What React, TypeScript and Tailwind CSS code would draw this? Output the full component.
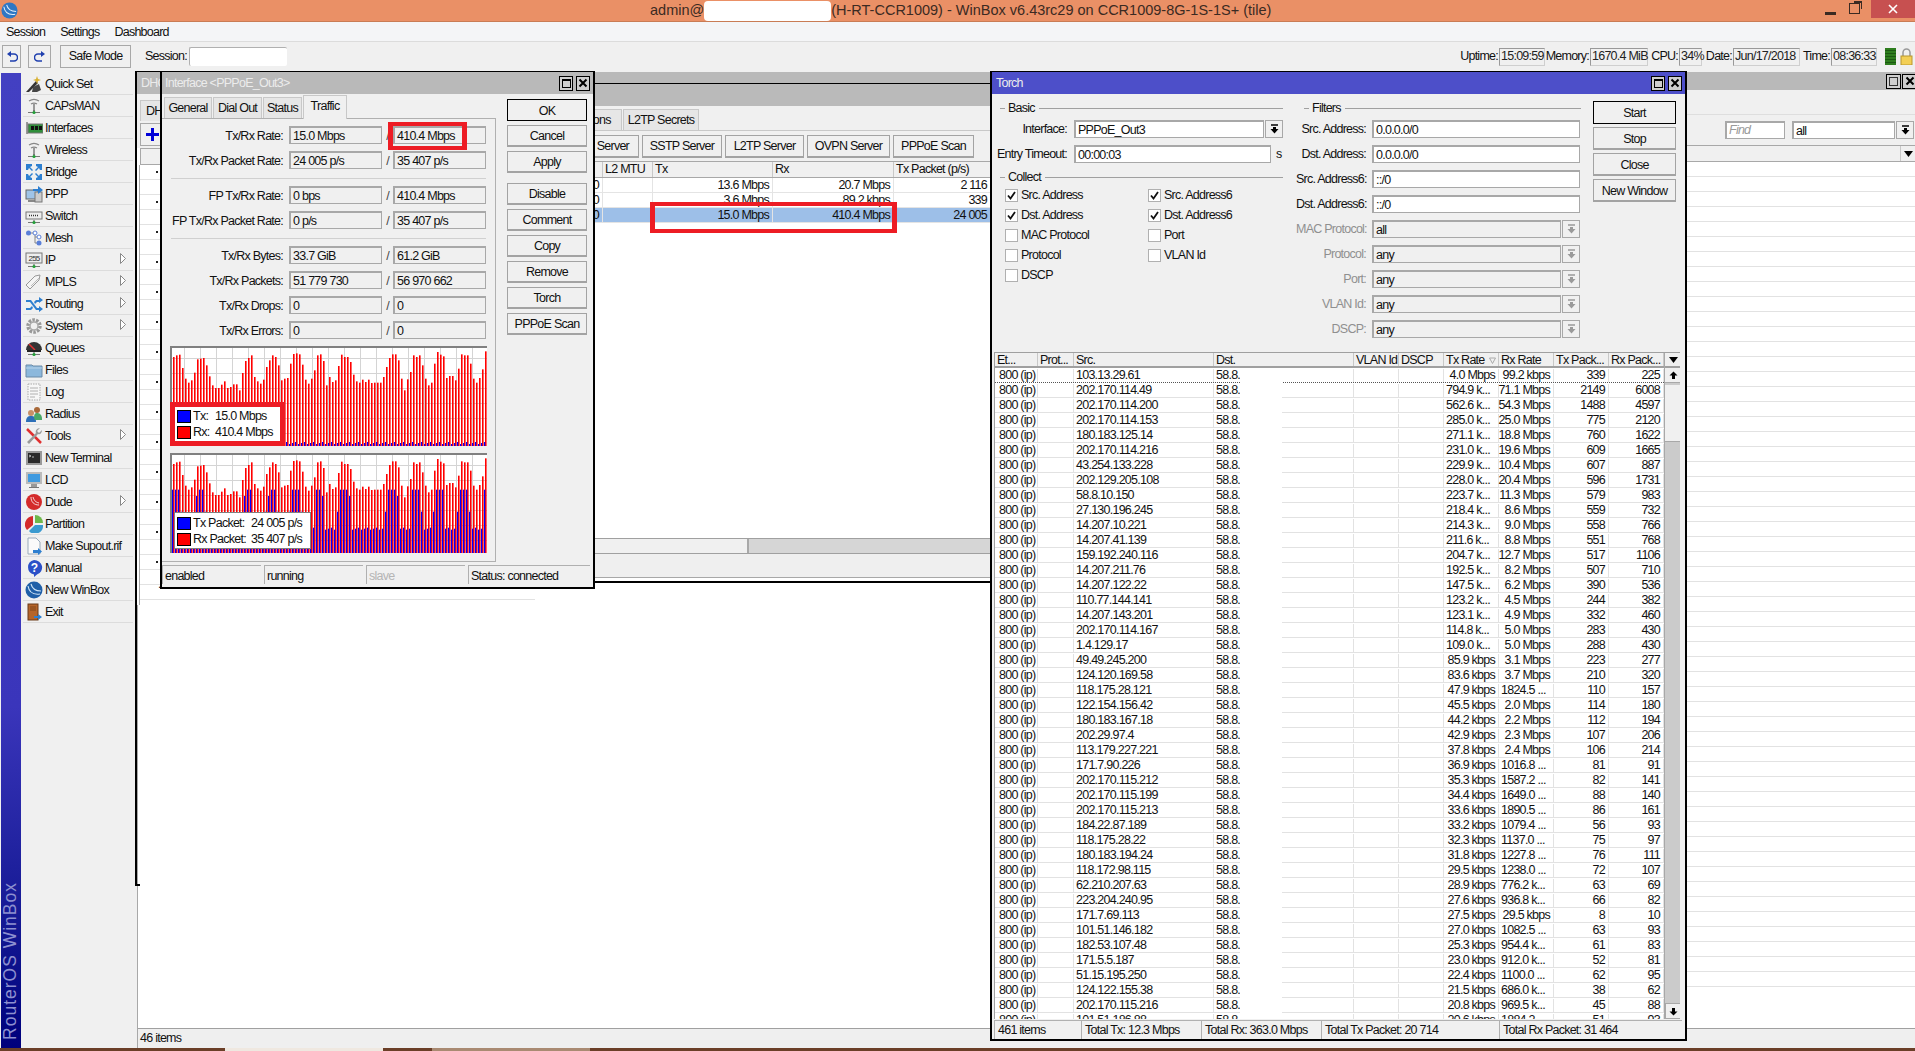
import React from "react";

const tops = [45,40,38,78,110,122,115,92,52,50,48,70,103,130,138,138,128,118,138,135,127,127,145,93,57,48,40,105,118,125,113,75,55,40,45,70,115,110,108,65,36,34,37,68,113,125,110,85,40,37,57,130,105,120,115,72,38,45,45,60,98,118,122,113,120,113,123,122,122,122,105,75,48,37,37,55,110,145,112,90,40,45,40,70,110,130,122,65,30,38,43,108,102,102,115,80,37,40,40,65,110,122,108,82,28];

function Chart({ packet, children }: { packet?: boolean; children: React.ReactNode }) {
  const hLines = [10, 25, 40, 55, 70, 85];
  const vLines = Array.from({ length: 20 }, (_, i) => 12 + i * 16);
  return (
    <div className="relative w-[317px] h-[100px] bg-white border-t-2 border-l-2 border-[#808080]">
      <svg width="315" height="98" viewBox="0 0 315 98" className="block">
        {hLines.map((y) => <line key={y} x1="0" x2="315" y1={y + 0.5} y2={y + 0.5} stroke="#d4d4d4" />)}
        {vLines.map((x) => <line key={x} y1="0" y2="98" x1={x + 0.5} x2={x + 0.5} stroke="#d4d4d4" />)}
        {tops.map((t, i) => {
          const x = i * 3;
          const red = (318 - t) / 3 - 2;
          let blue = 2 + (i % 3);
          if (packet) {
            const bt = t <= 50 ? 446 : t <= 60 ? 465 : t <= 80 ? 512 : 566 - (i % 3) * 3;
            blue = (636 - bt) / 3;
          }
          return (
            <g key={i}>
              <rect x={x + 1} y={98 - red} width="1.6" height={red} fill="#ff0000" />
              <rect x={x} y={98 - blue} width="1.2" height={blue} fill="#0000ff" />
            </g>
          );
        })}
      </svg>
      {children}
    </div>
  );
}

function LegendRow({ color, label, value, w }: { color: string; label: string; value: string; w: string }) {
  return (
    <div className="flex items-center h-[16px]">
      <span className={`w-[14px] h-[13px] border border-black ${color}`} />
      <span className={`ml-[2px] ${w}`}>{label}</span>
      <span>{value}</span>
    </div>
  );
}

function TitleButtons({ restore }: { restore?: boolean }) {
  return (
    <div className="flex gap-[3px] ml-auto mr-[3px]">
      <div className="w-[14px] h-[15px] border border-black bg-[#cfcfcf] flex items-center justify-center">
        <div className={restore ? "w-[8px] h-[9px] border border-[#333] border-t-2" : "w-[9px] h-[9px] border border-black border-t-2"} />
      </div>
      <div className="w-[14px] h-[15px] border border-black bg-[#cfcfcf] flex items-center justify-center">
        <svg width="10" height="10" viewBox="0 0 10 10"><path d="M1.5 1.5l7 7M8.5 1.5l-7 7" stroke="#000" strokeWidth="2" /></svg>
      </div>
    </div>
  );
}

function DropBtn({ disabled }: { disabled?: boolean }) {
  const c = disabled ? "#9a9a9a" : "#000";
  return (
    <div className="w-[18px] h-[18px] border border-[#a8a8a8] bg-[#f0f0f0] flex items-center justify-center">
      <svg width="9" height="10" viewBox="0 0 9 10"><path d="M1 1h7" stroke={c} strokeWidth="1.5" /><path d="M3 3h3v2h2.500L4.500 9.500.5 5H3z" fill={c} /></svg>
    </div>
  );
}

function WinButton({ label, w = "w-[80px]", h = "h-[22px] pt-[2px]", strong, end }: { label: string; w?: string; h?: string; strong?: boolean; end?: boolean }) {
  return (
    <div className={`${w} ${h} flex items-center ${end ? "justify-end pr-[9px]" : "justify-center"} bg-[#f0f0f0] shrink-0 ${strong ? "border border-black" : "border border-[#a3a3a3] border-b-2"}`}>
      {label}
    </div>
  );
}

function Field({ text, width = "w-[93px]", children }: { text: string; width?: string; children?: React.ReactNode }) {
  return (
    <div className={`relative ${width} h-[18px] border border-[#a8a8a8] border-t-2 border-l-2 bg-[#f0f0f0] pl-[2px] pt-[1px] flex items-center`}>
      {text}
      {children}
    </div>
  );
}

function StatRow({ label, a, b, red }: { label: string; a: string; b: string; red?: boolean }) {
  return (
    <div className="flex items-center h-[18px] mb-[7px]">
      <div className="w-[121px] text-right pt-[2px]">{label}</div>
      <div className="ml-[6px]"><Field text={a} /></div>
      <div className="w-[11px] text-center text-[#444] pt-[2px]">/</div>
      <Field text={b}>
        {red && <div className="absolute left-[-7px] top-[-6px] w-[79px] h-[28px] border-x-[5px] border-y-[4px] border-[#ed1c24]" />}
      </Field>
    </div>
  );
}

function Sep() {
  return <div className="h-[10px] pt-[2px] ml-[9px] mr-[9px]"><div className="h-[1px] bg-[#d0d0d0]" /></div>;
}

function Tab({ label, w, active }: { label: string; w: string; active?: boolean }) {
  return (
    <div className={`${w} flex items-center justify-center border-x border-t border-[#c8c8c8] whitespace-nowrap ${active ? "h-[24px] bg-[#f0f0f0] pb-[2px] -mb-[1px] relative" : "h-[21px] bg-[#e6e6e6] pt-[1px]"}`}>
      {label}
    </div>
  );
}

function InterfaceWindow() {
  return (
    <div className="absolute left-[25px] top-0 w-[435px] h-[518px] bg-[#f0f0f0] border-2 border-t border-black flex flex-col z-20">
      <div className="h-[22px] shrink-0 bg-[#b9b9b9] text-[#ececec] flex items-center pl-[3px]">
        Interface &lt;PPPoE_Out3&gt;
        <TitleButtons />
      </div>
      <div className="flex">
        <div className="w-[334px]">
          <div className="flex items-end h-[24px] pl-[2px] gap-[1px]">
            <Tab label="General" w="w-[48px]" />
            <Tab label="Dial Out" w="w-[49px]" />
            <Tab label="Status" w="w-[39px]" />
            <Tab label="Traffic" w="w-[44px]" active />
          </div>
          <div className="h-[444px] border-y border-r border-[#b0b0b0] pt-[7px]">
            <StatRow label="Tx/Rx Rate:" a="15.0 Mbps" b="410.4 Mbps" red />
            <StatRow label="Tx/Rx Packet Rate:" a="24 005 p/s" b="35 407 p/s" />
            <Sep />
            <StatRow label="FP Tx/Rx Rate:" a="0 bps" b="410.4 Mbps" />
            <StatRow label="FP Tx/Rx Packet Rate:" a="0 p/s" b="35 407 p/s" />
            <Sep />
            <StatRow label="Tx/Rx Bytes:" a="33.7 GiB" b="61.2 GiB" />
            <StatRow label="Tx/Rx Packets:" a="51 779 730" b="56 970 662" />
            <StatRow label="Tx/Rx Drops:" a="0" b="0" />
            <StatRow label="Tx/Rx Errors:" a="0" b="0" />
            <div className="ml-[8px] flex flex-col gap-[7px]">
              <Chart>
                <div className="absolute -left-[2px] top-[54px] w-[115px] h-[44px] bg-white border-x-[5px] border-y-[5px] border-[#ed1c24] pl-[2px] pt-[1px]">
                  <LegendRow color="bg-[#0000ff]" label="Tx:" value="15.0 Mbps" w="w-[22px]" />
                  <LegendRow color="bg-[#ff0000]" label="Rx:" value="410.4 Mbps" w="w-[22px]" />
                </div>
              </Chart>
              <Chart packet>
                <div className="absolute left-[2px] top-[57px] w-[137px] h-[37px] bg-white border border-[#808080] pl-[2px] pt-[2px]">
                  <LegendRow color="bg-[#0000ff]" label="Tx Packet:" value="24 005 p/s" w="w-[58px]" />
                  <LegendRow color="bg-[#ff0000]" label="Rx Packet:" value="35 407 p/s" w="w-[58px]" />
                </div>
              </Chart>
            </div>
          </div>
        </div>
        <div className="ml-[11px] mt-[5px] flex flex-col gap-[4px]">
          <WinButton label="OK" strong />
          <WinButton label="Cancel" />
          <WinButton label="Apply" />
          <div className="h-[6px]" />
          <div className="-mt-[4px] flex flex-col gap-[4px]">
            <WinButton label="Disable" />
            <WinButton label="Comment" />
            <WinButton label="Copy" />
            <WinButton label="Remove" />
            <WinButton label="Torch" />
            <WinButton label="PPPoE Scan" />
          </div>
        </div>
      </div>
      <div className="flex gap-[3px] mt-[3px]">
        {[["enabled", "w-[99px]", ""], ["running", "w-[99px]", ""], ["slave", "w-[99px]", "text-[#b5b5b5]"], ["Status: connected", "w-[122px]", ""]].map(([t, w, c]) => (
          <div key={t} className={`${w} ${c} h-[19px] border-t border-l border-[#b0b0b0] pl-[2px] pt-[2px] flex items-center`}>{t}</div>
        ))}
      </div>
    </div>
  );
}

function PPPWindow() {
  const cols = "grid grid-cols-[98px_50px_120px_121px_97px]";
  const rows = [
    ["0", "", "13.6 Mbps", "20.7 Mbps", "2 116", ""],
    ["0", "", "3.6 Mbps", "89.2 kbps", "339", ""],
    ["0", "", "15.0 Mbps", "410.4 Mbps", "24 005", "bg-[#9dbfe8]"],
  ];
  return (
    <div className="absolute left-[370px] top-[12px] w-[486px] h-[500px] bg-white border-t border-b-2 border-black flex flex-col z-10">
      <div className="h-[22px] shrink-0 bg-[#bababa]" />
      <div className="h-[25px] shrink-0 bg-[#f0f0f0] flex items-end gap-[1px] border-b border-[#c8c8c8] pl-[1px]">
        <Tab label="Active Connections" w="w-[116px]" />
        <Tab label="L2TP Secrets" w="w-[76px]" />
      </div>
      <div className="h-[30px] shrink-0 bg-[#f0f0f0] flex items-center gap-[3px]">
        <WinButton label="PPTP Server" w="w-[134px]" h="h-[23px] pt-[1px]" end />
        <WinButton label="SSTP Server" h="h-[23px] pt-[1px]" />
        <WinButton label="L2TP Server" w="w-[79px]" h="h-[23px] pt-[1px]" />
        <WinButton label="OVPN Server" w="w-[83px]" h="h-[23px] pt-[1px]" />
        <WinButton label="PPPoE Scan" w="w-[81px]" h="h-[23px] pt-[1px]" />
      </div>
      <div className="relative flex-1">
        <div className={`${cols} h-[17px] bg-[#f0f0f0] border-y border-[#a8a8a8]`}>
          {["", "L2 MTU", "Tx", "Rx", "Tx Packet (p/s)"].map((t, i) => (
            <div key={i} className="border-r border-[#c8c8c8] pl-[2px] flex items-center overflow-hidden whitespace-nowrap">{t}</div>
          ))}
        </div>
        {rows.map((r, i) => (
          <div key={i} className={`${cols} h-[15px] border-b border-[#e4e4e4] ${r[5]}`}>
            {r.slice(0, 5).map((t, j) => (
              <div key={j} className="border-r border-[#e4e4e4] pr-[3px] text-right flex items-center justify-end overflow-hidden whitespace-nowrap">{t}</div>
            ))}
          </div>
        ))}
        <div className="absolute left-[145px] top-[41px] w-[247px] h-[31px] border-x-[5px] border-y-[4px] border-[#ed1c24]" />
      </div>
      <div className="h-[16px] shrink-0 flex border-y border-[#a0a0a0] bg-[#d6d6d6]">
        <div className="w-[244px] bg-[#f0f0f0] border-r-2 border-[#a8a8a8]" />
      </div>
      <div className="h-[24px] shrink-0 bg-[#efefef] border-b border-[#a8a8a8] mb-[3px]" />
    </div>
  );
}

function TInput({ text, width }: { text: string; width: string }) {
  return <div className={`${width} h-[18px] bg-white border border-[#a8a8a8] border-t-2 border-l-2 pl-[2px] pt-[1px] flex items-center`}>{text}</div>;
}

function Legend({ label }: { label: string }) {
  return (
    <div className="flex items-center h-[12px]">
      <div className="w-[5px] h-[1px] ml-[8px] mr-[3px] bg-[#a0a0a0]" />
      <span>{label}</span>
      <div className="flex-1 h-[1px] ml-[4px] bg-[#a0a0a0]" />
    </div>
  );
}

function Check({ label, on }: { label: string; on?: boolean }) {
  return (
    <div className="flex items-center h-[20px]">
      <div className="w-[13px] h-[13px] bg-white border border-[#b0b0b0] flex items-center justify-center">
        {on && <svg width="9" height="9" viewBox="0 0 9 9"><path d="M1 4.500l2.500 3L8 1" fill="none" stroke="#111" strokeWidth="1.800" /></svg>}
      </div>
      <span className="ml-[3px]">{label}</span>
    </div>
  );
}

function FilterRow({ label, text, disabled }: { label: string; text: string; disabled?: boolean }) {
  return (
    <div className="flex items-center h-[18px] mb-[7px]">
      <div className={`w-[70px] text-right whitespace-nowrap pt-[1px] ${disabled ? "text-[#8f8f8f]" : ""}`}>{label}</div>
      <div className="ml-[6px] flex gap-[1px]">
        {disabled ? (
          <>
            <Field text={text} width="w-[189px]" />
            <DropBtn disabled />
          </>
        ) : (
          <TInput text={text} width="w-[208px]" />
        )}
      </div>
    </div>
  );
}

const torchRows: string[][] = [
  ["103.13.29.61","4.0 Mbps","99.2 kbps","339","225"],
  ["202.170.114.49","794.9 k...","71.1 Mbps","2149","6008"],
  ["202.170.114.200","562.6 k...","54.3 Mbps","1488","4597"],
  ["202.170.114.153","285.0 k...","25.0 Mbps","775","2120"],
  ["180.183.125.14","271.1 k...","18.8 Mbps","760","1622"],
  ["202.170.114.216","231.0 k...","19.6 Mbps","609","1665"],
  ["43.254.133.228","229.9 k...","10.4 Mbps","607","887"],
  ["202.129.205.108","228.0 k...","20.4 Mbps","596","1731"],
  ["58.8.10.150","223.7 k...","11.3 Mbps","579","983"],
  ["27.130.196.245","218.4 k...","8.6 Mbps","559","732"],
  ["14.207.10.221","214.3 k...","9.0 Mbps","558","766"],
  ["14.207.41.139","211.6 k...","8.8 Mbps","551","768"],
  ["159.192.240.116","204.7 k...","12.7 Mbps","517","1106"],
  ["14.207.211.76","192.5 k...","8.2 Mbps","507","710"],
  ["14.207.122.22","147.5 k...","6.2 Mbps","390","536"],
  ["110.77.144.141","123.2 k...","4.5 Mbps","244","382"],
  ["14.207.143.201","123.1 k...","4.9 Mbps","332","460"],
  ["202.170.114.167","114.8 k...","5.0 Mbps","283","430"],
  ["1.4.129.17","109.0 k...","5.0 Mbps","288","430"],
  ["49.49.245.200","85.9 kbps","3.1 Mbps","223","277"],
  ["124.120.169.58","83.6 kbps","3.7 Mbps","210","320"],
  ["118.175.28.121","47.9 kbps","1824.5 ...","110","157"],
  ["122.154.156.42","45.5 kbps","2.0 Mbps","114","180"],
  ["180.183.167.18","44.2 kbps","2.2 Mbps","112","194"],
  ["202.29.97.4","42.9 kbps","2.3 Mbps","107","206"],
  ["113.179.227.221","37.8 kbps","2.4 Mbps","106","214"],
  ["171.7.90.226","36.9 kbps","1016.8 ...","81","91"],
  ["202.170.115.212","35.3 kbps","1587.2 ...","82","141"],
  ["202.170.115.199","34.4 kbps","1649.0 ...","88","140"],
  ["202.170.115.213","33.6 kbps","1890.5 ...","86","161"],
  ["184.22.87.189","33.2 kbps","1079.4 ...","56","93"],
  ["118.175.28.22","32.3 kbps","1137.0 ...","75","97"],
  ["180.183.194.24","31.8 kbps","1227.8 ...","76","111"],
  ["118.172.98.115","29.5 kbps","1238.0 ...","72","107"],
  ["62.210.207.63","28.9 kbps","776.2 k...","63","69"],
  ["223.204.240.95","27.6 kbps","936.8 k...","66","82"],
  ["171.7.69.113","27.5 kbps","29.5 kbps","8","10"],
  ["101.51.146.182","27.0 kbps","1082.5 ...","63","93"],
  ["182.53.107.48","25.3 kbps","954.4 k...","61","83"],
  ["171.5.5.187","23.0 kbps","912.0 k...","52","81"],
  ["51.15.195.250","22.4 kbps","1100.0 ...","62","95"],
  ["124.122.155.38","21.5 kbps","686.0 k...","38","62"],
  ["202.170.115.216","20.8 kbps","969.5 k...","45","88"],
  ["101.51.186.88","20.6 kbps","1884.2 ...","51","93"],
];

const tCols = "grid grid-cols-[43px_36px_140px_140px_45px_45px_55px_55px_55px_55px]";

function ArrowGlyph({ up }: { up?: boolean }) {
  return (
    <svg width="9" height="9" viewBox="0 0 9 9" className={up ? "" : "rotate-180"}>
      <path d="M4.500 0.500L8.500 4.500H6V8H3V4.500H0.500z" fill="#000" />
    </svg>
  );
}

function TorchWindow() {
  const head = ["Et...", "Prot...", "Src.", "Dst.", "VLAN Id", "DSCP", "Tx Rate", "Rx Rate", "Tx Pack...", "Rx Pack..."];
  return (
    <div className="absolute left-[855px] top-0 w-[697px] h-[970px] bg-[#f0f0f0] border-2 border-t border-black flex flex-col z-30">
      <div className="h-[22px] shrink-0 bg-[#4d4fc9] text-[#ececec] flex items-center pl-[4px]">
        Torch
        <TitleButtons />
      </div>
      <div className="h-[258px] shrink-0 flex">
        <div className="w-[291px] pt-[8px]">
          <Legend label="Basic" />
          <div className="flex items-center h-[18px] mt-[6px]">
            <div className="w-[75px] text-right pt-[1px]">Interface:</div>
            <div className="ml-[7px]"><TInput text="PPPoE_Out3" width="w-[190px]" /></div>
            <div className="ml-[1px]"><DropBtn /></div>
          </div>
          <div className="flex items-center h-[18px] mt-[7px]">
            <div className="w-[75px] text-right whitespace-nowrap pt-[1px]">Entry Timeout:</div>
            <div className="ml-[7px]"><TInput text="00:00:03" width="w-[197px]" /></div>
            <div className="ml-[5px]">s</div>
          </div>
          <div className="mt-[8px]"><Legend label="Collect" /></div>
          <div className="grid grid-cols-[143px_1fr] pl-[13px] mt-[2px]">
            <Check label="Src. Address" on />
            <Check label="Src. Address6" on />
            <Check label="Dst. Address" on />
            <Check label="Dst. Address6" on />
            <Check label="MAC Protocol" />
            <Check label="Port" />
            <Check label="Protocol" />
            <Check label="VLAN Id" />
            <Check label="DSCP" />
          </div>
        </div>
        <div className="w-[285px] ml-[13px] pt-[8px]">
          <Legend label="Filters" />
          <div className="mt-[6px]">
            <FilterRow label="Src. Address:" text="0.0.0.0/0" />
            <FilterRow label="Dst. Address:" text="0.0.0.0/0" />
            <FilterRow label="Src. Address6:" text="::/0" />
            <FilterRow label="Dst. Address6:" text="::/0" />
            <FilterRow label="MAC Protocol:" text="all" disabled />
            <FilterRow label="Protocol:" text="any" disabled />
            <FilterRow label="Port:" text="any" disabled />
            <FilterRow label="VLAN Id:" text="any" disabled />
            <FilterRow label="DSCP:" text="any" disabled />
          </div>
        </div>
        <div className="ml-[12px] mt-[7px] flex flex-col gap-[3px]">
          <WinButton label="Start" w="w-[83px]" h="h-[23px] pt-[2px]" strong />
          <WinButton label="Stop" w="w-[83px]" h="h-[23px] pt-[2px]" />
          <WinButton label="Close" w="w-[83px]" h="h-[23px] pt-[2px]" />
          <WinButton label="New Window" w="w-[83px]" h="h-[23px] pt-[2px]" />
        </div>
      </div>
      <div className="relative ml-[2px] w-[686px] h-[667px] shrink-0 flex border-t border-l border-[#a0a0a0] bg-white overflow-hidden">
        <div className="w-[669px]">
          <div className={`${tCols} h-[15px] bg-[#f0f0f0] border-b-2 border-[#a0a0a0]`}>
            {head.map((h, i) => (
              <div key={h} className="border-r border-[#c8c8c8] pl-[2px] pt-[2px] flex items-center justify-between whitespace-nowrap overflow-hidden">
                {h}
                {i === 6 && <svg width="7" height="7" viewBox="0 0 7 7" className="mr-[2px]"><path d="M.5 1h6L3.500 6.500z" fill="none" stroke="#aaa" /></svg>}
              </div>
            ))}
          </div>
          {torchRows.map((r, i) => (
            <div key={i} className={`${tCols} h-[15px] pt-[1px] ${i === 0 ? "border-b border-dotted border-[#555]" : "border-b border-[#e2e2e2]"}`}>
              <div className="border-r border-[#e2e2e2] pl-[4px] flex items-center whitespace-nowrap">800 (ip)</div>
              <div className="border-r border-[#e2e2e2]" />
              <div className="border-r border-[#e2e2e2] pl-[2px] flex items-center">{r[0]}</div>
              <div className="border-r border-[#e2e2e2] pl-[2px] flex items-center">58.8.</div>
              <div className="border-r border-[#e2e2e2]" />
              <div className="border-r border-[#e2e2e2]" />
              {[r[1], r[2]].map((v, j) => (
                <div key={j} className={`border-r border-[#e2e2e2] px-[3px] flex items-center whitespace-nowrap ${v.endsWith("...") ? "justify-start pl-[2px]" : "justify-end"}`}>{v}</div>
              ))}
              <div className="border-r border-[#e2e2e2] pr-[3px] flex items-center justify-end">{r[3]}</div>
              <div className="border-r border-[#e2e2e2] pr-[3px] flex items-center justify-end">{r[4]}</div>
            </div>
          ))}
        </div>
        <div className="w-[17px] flex flex-col bg-[#cbcbcb] shrink-0 border-l border-[#a8a8a8]">
          <div className="h-[15px] bg-[#f0f0f0] border-b-2 border-[#a0a0a0] flex items-center justify-center">
            <svg width="9" height="6" viewBox="0 0 9 6"><path d="M0 0h9L4.500 6z" fill="#000" /></svg>
          </div>
          <div className="h-[15px] bg-[#f0f0f0] border-b border-[#a8a8a8] flex items-center justify-center"><ArrowGlyph up /></div>
          <div className="h-[57px] mt-[2px] bg-[#f0f0f0] border-b border-[#a8a8a8]" />
          <div className="flex-1" />
          <div className="h-[16px] bg-[#f0f0f0] border border-[#a8a8a8] flex items-center justify-center"><ArrowGlyph /></div>
        </div>
        <div className="absolute left-[245px] top-[15px] bottom-0 w-[42px] bg-white" />
      </div>
      <div className="flex h-[19px] mt-[1px] ml-[2px]">
        {[["461 items", "w-[87px]"], ["Total Tx: 12.3 Mbps", "w-[120px]"], ["Total Rx: 363.0 Mbps", "w-[120px]"], ["Total Tx Packet: 20 714", "w-[178px]"], ["Total Rx Packet: 31 464", "w-[183px]"]].map(([t, w]) => (
          <div key={t} className={`${w} border-t border-l border-[#b0b0b0] pl-[3px] flex items-center whitespace-nowrap`}>{t}</div>
        ))}
      </div>
    </div>
  );
}

function LeftSliver() {
  return (
    <>
      <div className="absolute left-0 top-0 w-[2px] h-[815px] bg-black z-[5]" />
      <div className="absolute left-0 top-[813px] w-[5px] h-[2px] bg-black z-[5]" />
      <div className="absolute left-0 top-0 w-[400px] h-[534px] bg-white border-t border-l-2 border-black flex flex-col z-[5] overflow-hidden">
        <div className="h-[22px] shrink-0 bg-[#b9b9b9] text-[#ececec] flex items-center pl-[4px]">DHCP</div>
        <div className="h-[27px] shrink-0 bg-[#f0f0f0] flex items-end pl-[3px]">
          <div className="w-[30px] h-[21px] bg-[#e6e6e6] border-x border-t border-[#c8c8c8] pl-[5px] flex items-center">DHCP</div>
        </div>
        <div className="h-[27px] shrink-0 bg-[#f0f0f0] pl-[3px] pt-[2px]">
          <div className="w-[30px] h-[23px] border border-[#a8a8a8] flex items-center pl-[5px]">
            <svg width="13" height="13" viewBox="0 0 13 13"><path d="M5 0h3v5h5v3H8v5H5V8H0V5h5z" fill="#0000d8" /></svg>
          </div>
        </div>
        <div className="h-[17px] shrink-0 ml-[3px] bg-[#f0f0f0] border-y border-l border-[#a8a8a8]" />
        <div className="ml-[2px] border-l border-[#a8a8a8] flex-1">
          {Array.from({ length: 30 }, (_, i) => (
            <div key={i} className="h-[15px] border-b border-[#e2e2e2] pl-[18px] overflow-visible relative whitespace-nowrap">
              {i === 28 ? (
                <span className="absolute left-[18px] top-[-7px]">.. TxRxMo</span>
              ) : i % 2 === 0 ? (
                <span className="absolute left-[16px] top-[6px] w-[2px] h-[2px] bg-[#222]" />
              ) : null}
            </div>
          ))}
        </div>
      </div>
    </>
  );
}

function MainWindow() {
  return (
    <div className="absolute left-[2px] top-[1px] right-0 bottom-0 bg-white border-l border-[#a8a8a8] flex flex-col">
      <div className="h-[18px] shrink-0 bg-[#b9b9b9] flex items-center">
        <div className="ml-auto flex gap-[1px] -mr-[2px]">
          <div className="w-[15px] h-[15px] border border-black bg-[#cfcfcf] flex items-center justify-center"><div className="w-[9px] h-[9px] border border-[#333]" /></div>
          <div className="w-[15px] h-[15px] border border-black bg-[#cfcfcf] flex items-center justify-center">
            <svg width="10" height="10" viewBox="0 0 10 10"><path d="M1.5 1.5l7 7M8.5 1.5l-7 7" stroke="#000" strokeWidth="2" /></svg>
          </div>
        </div>
      </div>
      <div className="h-[25px] shrink-0 bg-[#f0f0f0] border-b border-[#dedede]" />
      <div className="h-[30px] shrink-0 bg-[#f0f0f0] flex items-center justify-end gap-[7px] pr-[1px]">
        <div className="w-[60px] h-[18px] bg-white border border-[#a8a8a8] border-t-2 border-l-2 pl-[2px] italic text-[#9a9a9a] flex items-center">Find</div>
        <div className="flex gap-[1px]">
          <TInput text="all" width="w-[103px]" />
          <DropBtn />
        </div>
      </div>
      <div className="h-[17px] shrink-0 bg-[#f0f0f0] border-y border-[#a8a8a8] flex justify-end">
        <div className="w-[15px] border-l border-[#c8c8c8] flex items-center justify-center">
          <svg width="9" height="6" viewBox="0 0 9 6"><path d="M0 0h9L4.500 6z" fill="#000" /></svg>
        </div>
      </div>
      <div className="flex-1 pl-[1540px] overflow-hidden">
        {Array.from({ length: 55 }, (_, i) => <div key={i} className="h-[15px] border-b border-[#e2e2e2]" />)}
      </div>
      <div className="h-[20px] shrink-0 bg-[#efefef] border-t border-[#a0a0a0] flex items-center pl-[2px]">46 items</div>
    </div>
  );
}

function MenuIcon({ name }: { name: string }) {
  const s = { width: 18, height: 18, viewBox: "0 0 18 18" };
  const stand = (
    <>
      <path d="M9 13v2" stroke="#555" />
      <path d="M3 15.500h12" stroke="#777" />
      <circle cx="9" cy="15.500" r="1.600" fill="#22a038" />
    </>
  );
  switch (name) {
    case "Quick Set":
      return <svg {...s}><path d="M1 17L11 6l2 2-9 9z" fill="#333" /><path d="M8 12l6-3 2 6-4 2H7z" fill="#444" /><path d="M12 1l1 3 3 1-3 1-1 3-1-3-3-1 3-1z" fill="#d8b030" /></svg>;
    case "CAPsMAN":
    case "Wireless":
      return <svg {...s}><path d="M4 4c3-2 7-2 10 0M6 7c2-1.300 4-1.300 6 0" fill="none" stroke="#888" strokeWidth="1.200" /><path d="M9 6v8" stroke="#999" strokeWidth="2" />{stand}</svg>;
    case "Interfaces":
      return <svg {...s}><path d="M1 3h2v12H1z" fill="#999" /><rect x="3" y="5" width="15" height="9" fill="#2f8f3a" stroke="#777" /><rect x="6" y="7" width="3" height="4" fill="#111" /><rect x="10" y="7" width="3" height="4" fill="#111" /><rect x="14" y="7" width="3" height="4" fill="#111" /></svg>;
    case "Bridge":
      return <svg {...s}><path d="M1 1h6v2L5 4l3 3-1 1-3-3-1 2H1zM17 1v6h-2l-1-2-3 3-1-1 3-3-2-1V1zM1 17v-6h2l1 2 3-3 1 1-3 3 2 1v2zM17 17h-6v-2l2-1-3-3 1-1 3 3 1-2h2z" fill="#2d7fd0" /></svg>;
    case "PPP":
      return <svg {...s}><rect x="1" y="5" width="12" height="9" fill="#9fc4e8" stroke="#666" /><path d="M3 15h8v2H3z" fill="#888" /><rect x="10" y="7" width="7" height="10" fill="#ccc" stroke="#777" /><path d="M8 4h5V1l5 4-5 4V6H8z" fill="#2d7fd0" /></svg>;
    case "Switch":
      return <svg {...s}><rect x="1" y="5" width="16" height="7" fill="#eee" stroke="#777" /><path d="M4 8.500h1M6 8.500h1M8 8.500h1M10 8.500h1M12 8.500h1" stroke="#333" strokeWidth="1.500" />{stand}</svg>;
    case "Mesh":
      return <svg {...s}><path d="M4 4h6v10h4M10 8h4" fill="none" stroke="#888" /><circle cx="3.500" cy="4" r="2.500" fill="#5a7fd8" /><rect x="8" y="2" width="4" height="4" rx="2" fill="#fff" stroke="#5a7fd8" /><circle cx="14" cy="8" r="2" fill="#fff" stroke="#5a7fd8" /><circle cx="14" cy="14" r="2.500" fill="#5a7fd8" /></svg>;
    case "IP":
      return <svg {...s}><rect x="1" y="2" width="16" height="10" fill="#eee" stroke="#777" /><text x="9" y="10" textAnchor="middle" fontSize="8" fill="#333" fontFamily="Liberation Sans">255</text>{stand}</svg>;
    case "MPLS":
      return <svg {...s}><path d="M1 12L10 3l5-1-1 5-9 9z" fill="#f4f4f4" stroke="#999" /><path d="M6 13l8-8" stroke="#bbb" /></svg>;
    case "Routing":
      return <svg {...s}><path d="M1 5h5l6 8h2v-2l4 3-4 3v-2h-3L5 7H1zM1 13h4l2-2 1 2-2 2H1zM11 5h3V2l4 3-4 3V7h-2l-2 2-1-2z" fill="#2d7fd0" /></svg>;
    case "System":
      return <svg {...s}><circle cx="9" cy="9" r="6" fill="none" stroke="#999" strokeWidth="3.500" strokeDasharray="2.500 1.200" /><circle cx="9" cy="9" r="4" fill="none" stroke="#aaa" strokeWidth="1.500" /></svg>;
    case "Queues":
      return <svg {...s}><path d="M1 11a8 8 0 0 1 16 0z" fill="#333" /><path d="M4 5l6 6" stroke="#e03030" strokeWidth="1.500" /><path d="M2 11h14v2H2z" fill="#222" />{stand}</svg>;
    case "Files":
      return <svg {...s}><path d="M1 4h6l1 1h9v11H1z" fill="#8cb8dc" stroke="#6b8ba8" /><path d="M1 7h16" stroke="#b8d4ea" /></svg>;
    case "Log":
      return <svg {...s}><rect x="3" y="1" width="12" height="16" fill="#f7f7f7" stroke="#aaa" strokeDasharray="1.500 1" /><path d="M5 5h8M5 8h8M5 11h8M5 14h5" stroke="#b0b0b0" /></svg>;
    case "Radius":
      return <svg {...s}><circle cx="6" cy="8" r="3" fill="#c89068" /><path d="M1 17c0-5 2-6 5-6s5 1 5 6z" fill="#2d6fb8" /><circle cx="12" cy="5" r="3" fill="#a86838" /><path d="M9 13c0-4 1-5 3-5s5 1 5 6v1H10z" fill="#4aa868" /></svg>;
    case "Tools":
      return <svg {...s}><path d="M2 2l14 14" stroke="#e03030" strokeWidth="2.500" /><path d="M15 1l-3 3 2 2 3-3c0 3-2 5-4 4L4 17l-2-2 9-9c-1-2 1-5 4-5z" fill="#9a9a9a" /></svg>;
    case "New Terminal":
      return <svg {...s}><rect x="1" y="2" width="16" height="14" fill="#999" /><rect x="3" y="4" width="12" height="10" fill="#2a2a2a" /><path d="M4 6l2 1-2 1M7 8h2" stroke="#ddd" strokeWidth=".8" fill="none" /></svg>;
    case "LCD":
      return <svg {...s}><rect x="1" y="1" width="16" height="12" fill="#bbb" /><rect x="3" y="3" width="12" height="8" fill="#3f9ae0" /><path d="M6 13h6v3H6z" fill="#999" /><path d="M4 16h10v1H4z" fill="#777" /></svg>;
    case "Dude":
      return <svg {...s}><circle cx="9" cy="9" r="8" fill="#d42a2a" /><path d="M6 4c0 5 3 8 8 8M8 4c1 3 2 5 6 6" fill="none" stroke="#fff" strokeWidth=".8" /></svg>;
    case "Partition":
      return <svg {...s}><path d="M8 1v9l-6 5A8.500 8.500 0 0 1 8 1z" fill="#d42a2a" /><path d="M10 0a8 8 0 0 1 8 8h-8z" fill="#6db84a" /><path d="M18 10a8 8 0 0 1-14 6l6-6z" fill="#3a9ad0" /></svg>;
    case "Make Supout.rif":
      return <svg {...s}><path d="M3 1h8l4 4v12H3z" fill="#fafafa" stroke="#9ab" /><path d="M8 13h5v-2l4 3.500-4 3.500v-2H8z" fill="#2d7fd0" /></svg>;
    case "Manual":
      return <svg {...s}><path d="M9 1a8 7.500 0 0 1 3 14.500L9 18v-2.500A8 7.500 0 0 1 9 1z" fill="#2b50c8" /><text x="9" y="13" textAnchor="middle" fontSize="12" fontWeight="bold" fill="#fff" fontFamily="Liberation Sans">?</text></svg>;
    case "New WinBox":
      return <svg {...s}><circle cx="9" cy="9" r="8.500" fill="#1f5fa8" /><path d="M3 5c1 6 5 9 12 8M6 3c1 4 4 7 10 7" fill="none" stroke="#cfe4f7" strokeWidth="1.100" /></svg>;
    case "Exit":
      return <svg {...s}><rect x="3" y="1" width="10" height="16" fill="#b5652b" stroke="#6b3a18" /><rect x="5" y="3" width="6" height="5" fill="#9a5522" /><path d="M9 13h4v-2l4 3-4 3v-2H9z" fill="#2d7fd0" /></svg>;
    default:
      return null;
  }
}

const menu: [string, boolean?][] = [
  ["Quick Set"], ["CAPsMAN"], ["Interfaces"], ["Wireless"], ["Bridge"], ["PPP"], ["Switch"], ["Mesh"],
  ["IP", true], ["MPLS", true], ["Routing", true], ["System", true], ["Queues"], ["Files"], ["Log"], ["Radius"],
  ["Tools", true], ["New Terminal"], ["LCD"], ["Dude", true], ["Partition"], ["Make Supout.rif"], ["Manual"], ["New WinBox"], ["Exit"],
];

function Sidebar() {
  return (
    <div className="w-[135px] shrink-0 flex bg-[#f0f0f0]">
      <div className="w-[20px] ml-[1px] mt-[2px] bg-linear-to-b from-[#4340c2] via-[#3a35bb] via-[65%] to-[#00007c] flex flex-col justify-end items-center pb-[8px]">
        <span className="[writing-mode:vertical-rl] rotate-180 text-[17.500px] tracking-[1px] text-[#8d90d0] whitespace-nowrap">RouterOS WinBox</span>
      </div>
      <div className="flex-1 pt-[2px] pl-[2px] pr-[2px]">
        {menu.map(([label, sub]) => (
          <div key={label} className="relative h-[22px] flex items-center border-b border-[#dcdcdc] pl-[2px]">
            <MenuIcon name={label} />
            <span className="ml-[2px] pt-[2px] whitespace-nowrap">{label}</span>
            {sub && (
              <svg width="6" height="11" viewBox="0 0 6 11" className="absolute right-[7px] top-[4px]"><path d="M.5.500l5 5-5 5z" fill="#fff" stroke="#888" /></svg>
            )}
          </div>
        ))}
      </div>
    </div>
  );
}

function StatusPair({ label, value, lw, w }: { label: string; value: string; lw: string; w: string }) {
  return (
    <div className="flex items-center">
      <span className={`${lw} flex justify-end pr-[1px] whitespace-nowrap`}>{label}</span>
      <span className={`${w} h-[18px] border border-[#cfcfcf] border-l-[#999] border-t-[#999] pl-[1px] flex items-center whitespace-nowrap text-[#222]`}>{value}</span>
    </div>
  );
}

export default function App() {
  return (
    <div className="relative w-[1915px] h-[1051px] overflow-hidden flex flex-col bg-[#f0f0f0] text-[#111] text-[12.500px] tracking-[-0.75px] leading-none font-['Liberation_Sans',Arial,sans-serif]">
      <div className="h-[22px] shrink-0 bg-[#ea9066] border-b border-[#c97c55] flex items-center relative">
        <svg width="17" height="17" viewBox="0 0 18 18" className="ml-[1px]"><circle cx="9" cy="9" r="8.500" fill="#2f77c4" /><path d="M3 5c1 6 5 9 12 8M6 3c1 4 4 7 10 7" fill="none" stroke="#e4effa" strokeWidth="1.100" /></svg>
        <div className="ml-[632px] flex items-center text-[14.500px] tracking-[0] text-[#3b2a22]">
          admin@
          <span className="w-[127px] h-[20px] bg-white rounded-[4px]" />
          (H-RT-CCR1009) - WinBox v6.43rc29 on CCR1009-8G-1S-1S+ (tile)
        </div>
        <div className="ml-auto flex items-start h-[21px]">
          <div className="w-[11px] h-[3px] mt-[12px] mr-[13px] bg-[#3b2a22]" />
          <div className="relative w-[11px] h-[11px] mt-[3px] mr-[11px] border border-[#3b2a22]">
            <div className="absolute -right-[3px] -top-[3px] w-[8px] h-[8px] border-t-2 border-r border-[#3b2a22]" />
          </div>
          <div className="w-[44px] h-[18px] bg-[#c75050] flex items-center justify-center">
            <svg width="10" height="10" viewBox="0 0 10 10"><path d="M1 1l8 8M9 1l-8 8" stroke="#fff" strokeWidth="1.600" /></svg>
          </div>
        </div>
      </div>
      <div className="h-[20px] shrink-0 bg-[#f4f5f7] border-b border-[#dcdcdc] flex items-center pl-[6px] pt-[2px] gap-[15px]">
        <span>Session</span>
        <span>Settings</span>
        <span>Dashboard</span>
      </div>
      <div className="h-[29px] shrink-0 bg-[#f0f0f0] flex items-center pl-[2px] pr-[2px]">
        <div className="w-[19px] h-[23px] border border-[#a8a8a8] flex items-center justify-center">
          <svg width="12" height="12" viewBox="0 0 12 12"><path d="M4 3h4a3 3 0 0 1 0 7H4" fill="none" stroke="#1f3fae" strokeWidth="1.500" /><path d="M5 0L1 3l4 3z" fill="#1f3fae" /></svg>
        </div>
        <div className="w-[23px] h-[23px] ml-[7px] border border-[#a8a8a8] flex items-center justify-center">
          <svg width="12" height="12" viewBox="0 0 12 12"><path d="M8 3H4a3 3 0 0 0 0 7h4" fill="none" stroke="#1f3fae" strokeWidth="1.500" /><path d="M7 0l4 3-4 3z" fill="#1f3fae" /></svg>
        </div>
        <div className="w-[71px] h-[23px] ml-[9px] border border-[#a8a8a8] flex items-center justify-center">Safe Mode</div>
        <span className="ml-[14px]">Session:</span>
        <div className="w-[98px] h-[19px] ml-[2px] bg-white border-t border-l border-[#b0b0b0] rounded-[2px]" />
        <div className="ml-auto flex items-center">
          <StatusPair label="Uptime:" value="15:09:59" lw="w-[36px]" w="w-[46px]" />
          <div className="w-[5px]" />
          <StatusPair label="Memory:" value="1670.4 MiB" lw="w-[40px]" w="w-[58px]" />
          <div className="w-[4px]" />
          <StatusPair label="CPU:" value="34%" lw="w-[27px]" w="w-[23px]" />
          <div className="w-[5px]" />
          <StatusPair label="Date:" value="Jun/17/2018" lw="w-[26px]" w="w-[67px]" />
          <div className="w-[5px]" />
          <StatusPair label="Time:" value="08:36:33" lw="w-[26px]" w="w-[46px]" />
          <div className="w-[11px] h-[17px] ml-[8px] bg-[repeating-linear-gradient(#2e7d1e_0,#2e7d1e_2px,#1c5a12_2px,#1c5a12_3px)]" />
          <svg width="13" height="17" viewBox="0 0 13 17" className="ml-[4px]"><path d="M3 8V4.500a3.500 3.500 0 0 1 7 0V8" fill="none" stroke="#999" strokeWidth="1.500" /><rect x="1" y="8" width="11" height="9" fill="#f3cf55" stroke="#b8962e" /></svg>
        </div>
      </div>
      <div className="flex-1 flex min-h-0">
        <Sidebar />
        <div className="relative flex-1">
          <MainWindow />
          <LeftSliver />
          <PPPWindow />
          <InterfaceWindow />
          <TorchWindow />
        </div>
      </div>
      <div className="h-[3px] shrink-0 bg-[#6b3f28] flex">
        <div className="w-[225px]" />
        <div className="w-[158px] bg-[#efe8e0]" />
        <div className="w-[49px]" />
        <div className="w-[158px] bg-[#a98a72]" />
      </div>
    </div>
  );
}
